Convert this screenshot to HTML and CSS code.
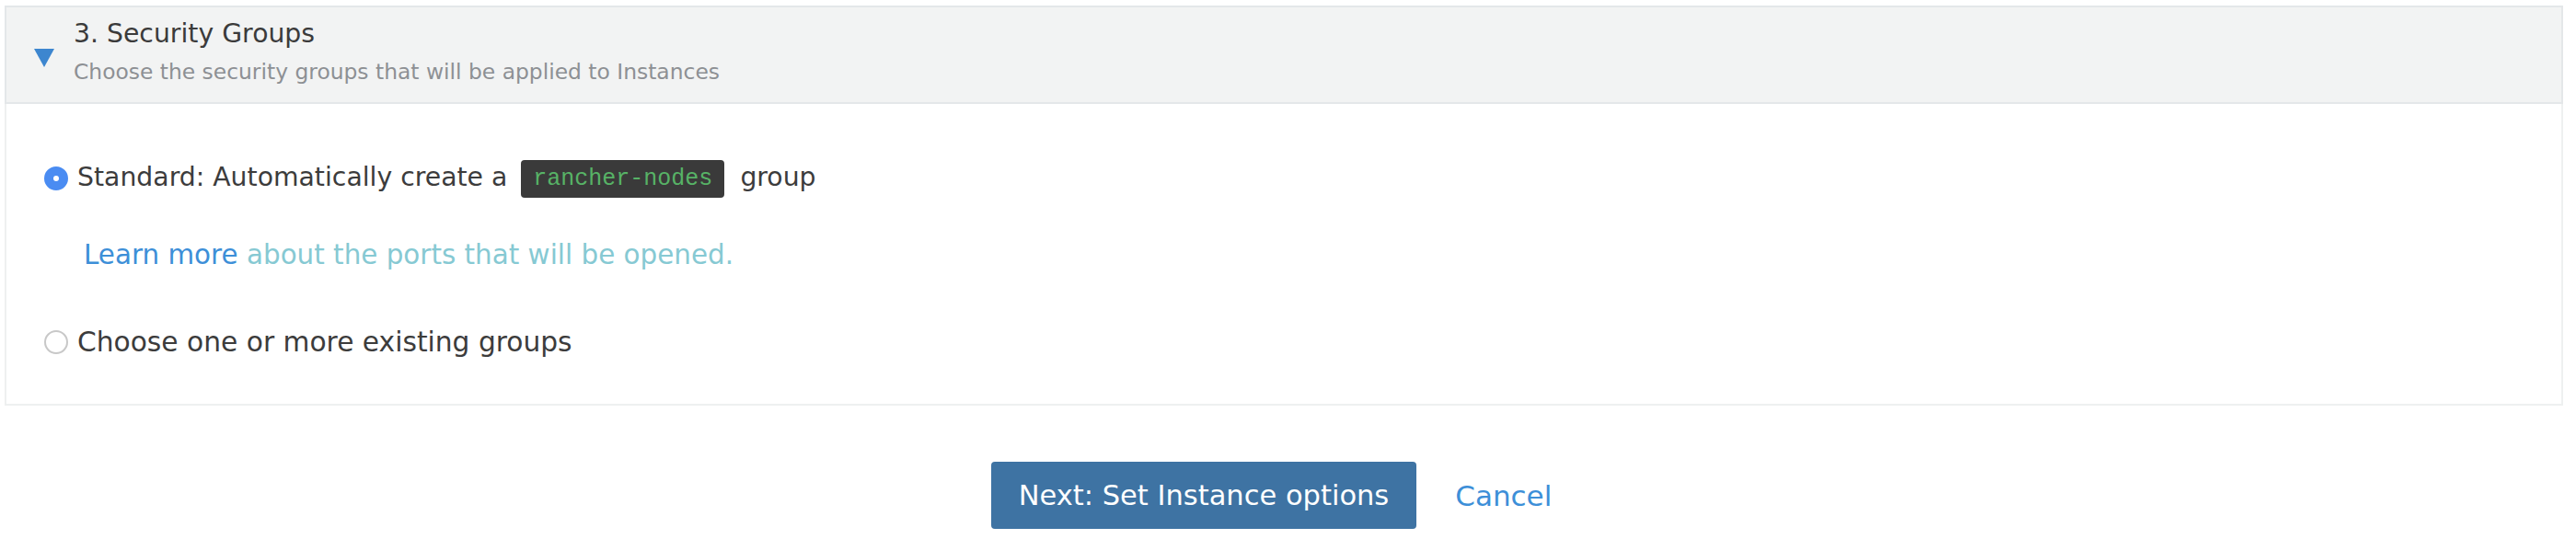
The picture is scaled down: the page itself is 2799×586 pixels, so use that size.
FILE: index.html
```html
<!DOCTYPE html>
<html>
<head>
<meta charset="utf-8">
<link rel="stylesheet" href="styles.css">
</head>
<body>
<div class="section">
  <div class="section-header">
    <span class="caret"></span>
    <div class="titles">
      <div class="title">3. Security Groups</div>
      <div class="subtitle">Choose the security groups that will be applied to Instances</div>
    </div>
  </div>
  <div class="section-body">
    <label class="radio-row">
      <span class="radio checked"></span>
      <span class="label">Standard: Automatically create a <code class="code">rancher-nodes</code> group</span>
    </label>
    <p class="help"><a class="link">Learn more</a> about the ports that will be opened.</p>
    <label class="radio-row second">
      <span class="radio"></span>
      <span class="label label-wide">Choose one or more existing groups</span>
    </label>
  </div>
</div>
<div class="footer">
  <button class="btn-primary">Next: Set Instance options</button>
  <button class="btn-link">Cancel</button>
</div>
</body>
</html>
```
FILE: styles.css
```css
html, body {
  margin: 0;
  padding: 0;
  background: #ffffff;
}
body {
  font-family: "DejaVu Sans", "Open Sans", sans-serif;
  color: #3c3c3c;
}
.section {
  margin: 6px 14px 0 5px;
}
.section-header {
  display: flex;
  align-items: center;
  height: 103px;
  background: #f2f3f3;
  border: 2px solid #e4e7e9;
  padding-left: 30px;
}
.caret {
  width: 0;
  height: 0;
  border-left: 11px solid transparent;
  border-right: 11px solid transparent;
  border-top: 20px solid #3d86cf;
  margin-right: 21px;
  margin-top: 6px;
}
.titles {
  display: flex;
  flex-direction: column;
  margin-top: -6px;
}
.title {
  font-size: 28.3px;
  line-height: 32px;
  color: #3b3b3b;
}
.subtitle {
  font-size: 23.4px;
  line-height: 30px;
  margin-top: 10px;
  color: #8d9094;
}
.section-body {
  border: 2px solid #eef0f0;
  border-top: none;
  height: 326px;
  padding: 0 0 0 41px;
}
.radio-row {
  display: flex;
  align-items: center;
  padding-top: 60px;
}
.radio-row.second {
  padding-top: 55px;
}
.radio {
  width: 26px;
  height: 26px;
  border-radius: 50%;
  box-sizing: border-box;
  border: 2px solid #c8c8c8;
  margin-right: 10px;
  flex: none;
  position: relative;
}
.radio.checked {
  background: #4a8cf2;
  border-color: #4a8cf2;
}
.radio.checked::after {
  content: "";
  position: absolute;
  left: 8px;
  top: 8px;
  width: 6px;
  height: 6px;
  border-radius: 50%;
  background: #fff;
}
.label {
  font-size: 28.3px;
  line-height: 40px;
  color: #3c3c3c;
}
.label-wide {
  font-size: 29.7px;
}
.code {
  display: inline-block;
  background: #3a3a3a;
  color: #57b266;
  font-family: "Liberation Mono", "Courier New", monospace;
  font-size: 25px;
  line-height: 41px;
  padding: 0 13px;
  border-radius: 4px;
  margin: 0 8px 0 6px;
  vertical-align: middle;
}
.help {
  margin: 42px 0 0 43px;
  font-size: 29.4px;
  line-height: 40px;
  color: #86c9d3;
}
.link {
  color: #3d8fd8;
}
.footer {
  display: flex;
  justify-content: center;
  gap: 15px;
  margin: 61px 14px 0 5px;
}
.btn-primary {
  font-family: "DejaVu Sans", "Open Sans", sans-serif;
  font-size: 30.5px;
  height: 73px;
  padding: 0 30px;
  background: #3e73a3;
  color: #fff;
  border: none;
  border-radius: 4px;
}
.btn-link {
  font-family: "DejaVu Sans", "Open Sans", sans-serif;
  font-size: 31px;
  height: 73px;
  padding: 0 27px;
  background: transparent;
  color: #3d8fd8;
  border: none;
}
```
